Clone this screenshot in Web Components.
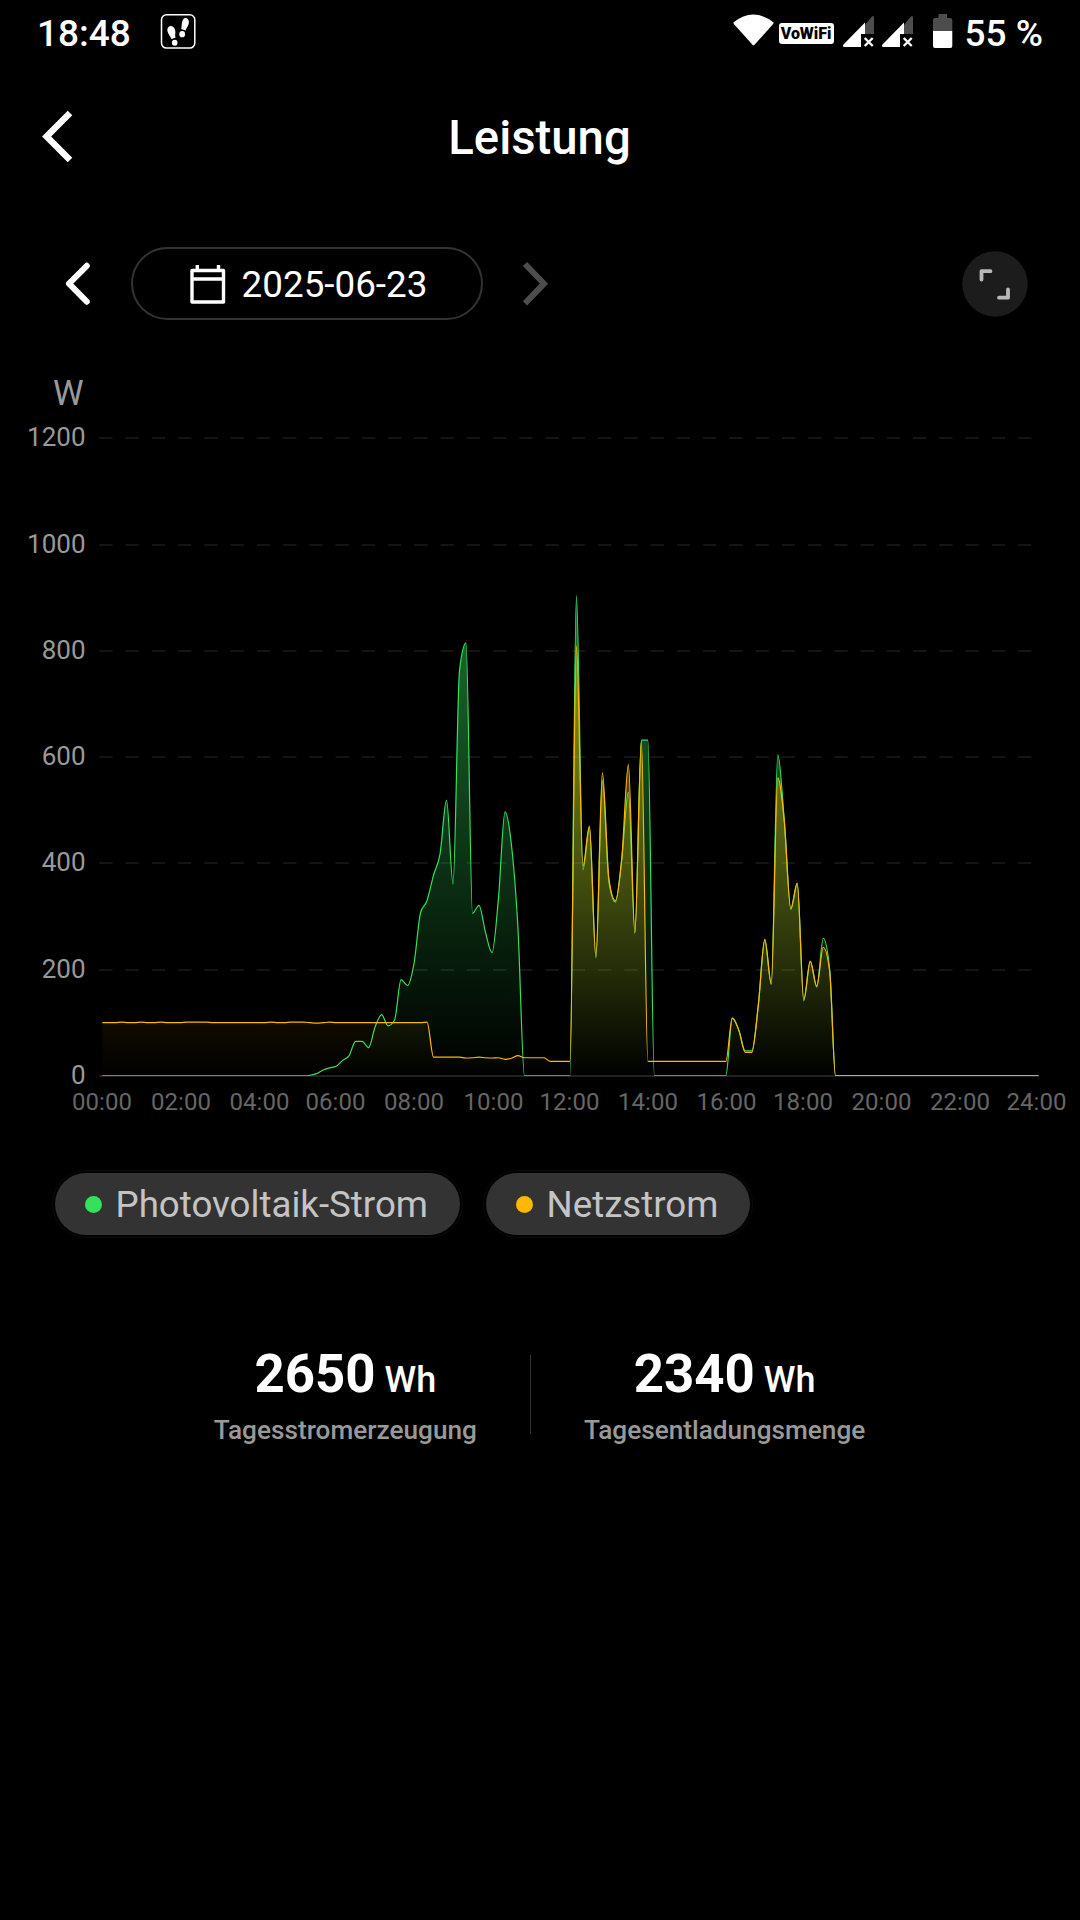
<!DOCTYPE html>
<html lang="de">

<head>
    <meta charset="UTF-8">
    <meta name="viewport" content="width=device-width, initial-scale=1.0">
    <title>Leistung</title>
    <style>
        body {
            margin: 0;
            background: #000;
            color: #fff;
            font-family: Roboto, "Liberation Sans", sans-serif;
        }
    </style>
</head>

<body>
    <template id="status-bar-template">
        <style>
            :host {
                display: flex;
                align-items: center;
                height: 66px;
                padding: 0 37px 0 37px;
                box-sizing: border-box;
                font-size: 37px;
                font-weight: 500;
            }
            svg { display: block; flex: none; }
            .time { width: 123px; }
            .icons { display: flex; align-items: center; margin-left: auto; height: 66px; }
            .badge {
                width: 55px;
                height: 21px;
                margin: 0 9px 0 5px;
                padding-bottom: 1px;
                box-sizing: border-box;
                border-radius: 3px;
                background: #fff;
                color: #000;
                font-size: 16px;
                font-weight: 900;
                line-height: 21px;
                text-align: center;
                white-space: nowrap;
            }
            .signal + .signal { margin-left: 8px; }
            .battery { margin: 0 12px 0 20px; }
        </style>
        <span class="time"><slot name="time"></slot></span>
        <svg width="37" height="66" viewBox="160 0 37 66">
            <rect x="161.5" y="14.8" width="33.3" height="33.3" rx="5" fill="none" stroke="#fff" stroke-width="1.5" />
            <g fill="#fff">
                <path d="M170.500 26c2.500-.5 4.500 2 4.800 5 .2 3-.5 4 .2 6.800l-4.200 1.200c-.8-3-2.800-4.300-3.600-7-.9-3 .2-5.500 2.800-6z" />
                <ellipse cx="174.700" cy="42.800" rx="2.800" ry="3" />
                <path d="M186 18c2.600.5 3.500 3.200 2.600 6.200-.8 2.600-2.300 3.500-2.900 6.200l-4.500-1.300c.7-2.700.3-4 .8-6.600.6-3 2-4.900 4-4.500z" />
                <ellipse cx="182.200" cy="34.200" rx="2.900" ry="3.100" />
            </g>
        </svg>
        <div class="icons">
            <svg width="41" height="66" viewBox="733 0 41 66">
                <path d="M733.300 22.500q20-16 40.400 0q-.2 1-1 2L754.500 44.700q-1 1-2 0L734.300 24.500q-.8-1-1-2z" fill="#fff" />
            </svg>
            <span class="badge">VoWiFi</span>
            <svg class="signal" width="31" height="66" viewBox="843 0 31 66">
                <path d="M865 25L871.500 17Q874 14.500 874 18V34H865z" fill="#4d4d4d" />
                <path d="M865 22.500V34H861V47H844.500Q842 46.500 843.500 44.500z" fill="#fff" />
                <path d="M864.700 38l8 8m0-8l-8 8" stroke="#fff" stroke-width="2.400" />
            </svg>
            <svg class="signal" width="31" height="66" viewBox="843 0 31 66">
                <path d="M865 25L871.500 17Q874 14.500 874 18V34H865z" fill="#4d4d4d" />
                <path d="M865 22.500V34H861V47H844.500Q842 46.500 843.500 44.500z" fill="#fff" />
                <path d="M864.700 38l8 8m0-8l-8 8" stroke="#fff" stroke-width="2.400" />
            </svg>
            <svg class="battery" width="20" height="66" viewBox="933 0 20 66">
                <path d="M938.500 18V14H947V18H950.500Q952.300 18 952.300 20V31H933V20Q933 18 935 18z" fill="#4d4d4d" />
                <path d="M933 31H952.300V46Q952.300 48 950.500 48H935Q933 48 933 46z" fill="#fff" />
            </svg>
            <span><slot name="battery"></slot></span>
        </div>
    </template>

    <template id="page-header-template">
        <style>
            :host {
                display: grid;
                grid-template-columns: 1fr auto 1fr;
                align-items: center;
                height: 142px;
                padding: 0 42px 0 41px;
            }
            svg { display: block; }
            h1 { margin: 0; padding-top: 2px; font-size: 47.300px; font-weight: 500; line-height: 56px; }
        </style>
        <svg width="33" height="56" viewBox="0 0 33 56">
            <path d="M29 4L5.600 27.500L29 51" fill="none" stroke="#fff" stroke-width="6.500" />
        </svg>
        <h1><slot></slot></h1>
    </template>

    <template id="date-picker-template">
        <style>
            :host {
                display: flex;
                align-items: center;
                height: 151px;
                margin-bottom: 1px;
                padding: 0 52px 0 65px;
            }
            svg { display: block; flex: none; }
            .date {
                display: flex;
                align-items: center;
                justify-content: center;
                gap: 16px;
                width: 352px;
                height: 73px;
                margin: 0 38px 0 40px;
                padding: 1px 0 0 3px;
                box-sizing: border-box;
                border: 2px solid #333;
                border-radius: 37px;
                font-size: 36.800px;
            }
            .expand { margin-left: auto; }
        </style>
        <svg width="26" height="48" viewBox="65 260 26 48">
            <path d="M86.800 265.800L69 283.700L86.800 301.700" fill="none" stroke="#fff" stroke-width="6" stroke-linecap="round" stroke-linejoin="round" />
        </svg>
        <div class="date">
            <svg width="36" height="42" viewBox="0 0 36 42">
                <path d="M2 7.500h31.500v31.500h-31.500zM2 16h32M7.300 2v5M28.500 2v5" fill="none" stroke="#fff" stroke-width="3.400" stroke-linejoin="round" />
            </svg>
            <slot></slot>
        </div>
        <svg width="30" height="48" viewBox="521 260 30 48">
            <path d="M525 264L544 283.700L525 303.400" fill="none" stroke="#4d4d4d" stroke-width="6" />
        </svg>
        <svg class="expand" width="66" height="66" viewBox="0 0 66 66">
            <circle cx="33" cy="33" r="32.700" fill="#1c1c1c" />
            <path d="M19.500 28.500V20.200H28.500M46 38.500V46.700H37" fill="none" stroke="#b8b8b8" stroke-width="3.800" stroke-linecap="round" stroke-linejoin="round" />
        </svg>
    </template>

    <template id="power-chart-template">
        <style>
            :host { display: block; height: 760px; }
            svg { display: block; }
            .unit { font-size: 34.500px; fill: #999; }
            .y { font-size: 26px; fill: #999; text-anchor: end; }
            .x { font-size: 24px; fill: #666; text-anchor: middle; }
            .grid { stroke: #141414; stroke-width: 2; stroke-dasharray: 13.300 12.950; }
            .axis { stroke: #222; stroke-width: 2; }
            .line { fill: none; stroke-width: 1.200; stroke-linejoin: bevel; }
        </style>
        <svg width="1080" height="760" viewBox="0 360 1080 760">
            <defs>
                <linearGradient id="pv-fill" x1="0" y1="0" x2="0" y2="1">
                    <stop offset="0" stop-color="#35e05c" stop-opacity=".5" />
                    <stop offset="1" stop-color="#35e05c" stop-opacity="0" />
                </linearGradient>
                <linearGradient id="net-fill" x1="0" y1="0" x2="0" y2="1">
                    <stop offset="0" stop-color="#ffb800" stop-opacity=".5" />
                    <stop offset="1" stop-color="#ffb800" stop-opacity="0" />
                </linearGradient>
                <clipPath id="plot">
                    <rect x="99" y="430" width="942" height="646" />
                </clipPath>
            </defs>
            <text class="unit" x="53" y="405">W</text>
            <g id="axes"></g>
            <g id="series" clip-path="url(#plot)"></g>
        </svg>
    </template>

    <template id="legend-chip-template">
        <style>
            :host {
                display: flex;
                align-items: center;
                gap: 13.500px;
                height: 62px;
                padding: 0 32px 0 30px;
                box-sizing: border-box;
                border-radius: 31px;
                outline: 1px solid #0c0c0c;
                outline-offset: 2px;
                background: #333;
                color: #c4c4c4;
                font-size: 36.700px;
            }
            i { width: 17px; height: 17px; border-radius: 50%; background: var(--dot); }
        </style>
        <i></i><slot></slot>
    </template>

    <template id="energy-stat-template">
        <style>
            :host { display: flex; flex-direction: column; align-items: center; }
            .value { display: flex; align-items: baseline; gap: 9px; height: 62px; font-size: 36px; font-weight: 500; line-height: 62px; }
            b { font-size: 52.800px; font-weight: 700; }
            .label { margin-top: 10px; color: #999; font-size: 26.200px; font-weight: 500; line-height: 30px; }
        </style>
        <div class="value"><b><slot name="value"></slot></b><slot name="unit"></slot></div>
        <div class="label"><slot></slot></div>
    </template>

    <template id="power-page-template">
        <style>
            :host { display: flex; flex-direction: column; width: 1080px; height: 1920px; overflow: hidden; background: #000; }
            .legend { display: flex; gap: 26px; margin: 53px 0 0 55px; }
            .stats { display: flex; justify-content: center; align-items: flex-start; gap: 53px; margin-top: 108px; padding-right: 1px; }
            .rule { width: 1px; height: 79px; margin-top: 12px; background: #333; }
        </style>
        <status-bar><span slot="time">18:48</span><span slot="battery">55 %</span></status-bar>
        <page-header>Leistung</page-header>
        <date-picker>2025-06-23</date-picker>
        <power-chart></power-chart>
        <div class="legend">
            <legend-chip style="--dot: #35e05c">Photovoltaik-Strom</legend-chip>
            <legend-chip style="--dot: #ffb800">Netzstrom</legend-chip>
        </div>
        <div class="stats">
            <energy-stat><span slot="value">2650</span><span slot="unit">Wh</span>Tagesstromerzeugung</energy-stat>
            <div class="rule"></div>
            <energy-stat><span slot="value">2340</span><span slot="unit">Wh</span>Tagesentladungsmenge</energy-stat>
        </div>
    </template>

    <power-page></power-page>

    <script>
        class TemplateElement extends HTMLElement {
            constructor() {
                super();
                this.attachShadow({ mode: 'open' });
                const tmp = document.getElementById(this.localName + '-template');
                this.shadowRoot.appendChild(tmp.content.cloneNode(true));
            }
        }

        // watts, one value every ten minutes from 00:00
        const fill = (n, v) => Array(n).fill(v);
        const pv = [
            ...fill(32, 0), 1, 4, 11, 15, 18, 29, 38, 65, 65, 53, 92, 115, 94, 105, 181, 170, 212, 307, 330,
            378, 418, 519, 361, 763, 815, 306, 321, 270, 232, 335, 497, 434, 277, ...fill(8, 0),
            904, 388, 468, 222, 556, 365, 327, 411, 534, 268, 632, 632, ...fill(12, 0),
            108, 86, 47, 47, 133, 256, 172, 605, 481, 313, 362, 141, 215, 167, 259, 199
        ];
        const net = [
            100, 100, 100, 101, 100, 100, 101, 100, 100, 101, 100, 100, 100, 101, 101, 101, 101, 100, 100, 100,
            100, 100, 100, 100, 100, 100, 101, 100, 100, 101, 101, 101, 100, 99, 100, 101, 100, 100, 100, 100,
            100, 100, 100, 100, 100, 100, 100, 100, 100, 100, 101, 35, 35, 35, 35, 35, 33.5, 34, 35, 34, 33.5,
            34, 31, 33, 38, 34, 34, 34, 34, 27, 27, 27, 27,
            809, 395, 470, 225, 571, 371, 330, 412, 586, 270, 630, ...fill(13, 27),
            109, 86, 44, 44, 132, 257, 174, 561, 480, 315, 363, 144, 216, 169, 242, 196
        ];

        const LEFT = 102.3, BASE = 1075.8, STEP = 6.495, SCALE = .5311;

        function toPoints(values) {
            const points = values.map((v, i) => [LEFT + i * STEP, BASE - v * SCALE]);
            // last reading is 18:48, nothing after that
            points.push([835.5, BASE], [1038.5, BASE]);
            return points;
        }

        // monotone cubic: flat at every peak and valley, no overshoot
        function smoothPath(points) {
            const slope = i => (points[i + 1][1] - points[i][1]) / (points[i + 1][0] - points[i][0]);
            const tangents = points.map((p, i) => {
                if (i === 0 || i === points.length - 1) return 0;
                const a = slope(i - 1), b = slope(i);
                if (a * b <= 0) return 0;
                return Math.sign(a) * Math.min(2 * Math.abs(a), 2 * Math.abs(b), Math.abs(a + b) / 2);
            });
            let d = `M${points[0]}`;
            for (let i = 1; i < points.length; i++) {
                const [px, py] = points[i - 1];
                const [x, y] = points[i];
                const h = (x - px) / 3;
                d += `C${px + h},${py + h * tangents[i - 1]} ${x - h},${y - h * tangents[i]} ${x},${y}`;
            }
            return d;
        }

        class PowerChart extends TemplateElement {
            connectedCallback() {
                let axes = '';
                for (let w = 0; w <= 1200; w += 200) {
                    const y = Math.floor(1076.3 - w * .5313);
                    axes += `<line class="${w ? 'grid' : 'axis'}" x1="99.300" x2="${w ? 1034 : 1039}" y1="${y}" y2="${y}" />`;
                    axes += `<text class="y" x="85.500" y="${y + 8}">${w}</text>`;
                }
                const centers = [102, 181, 259.5, 335.5, 414, 493.5, 569.5, 648, 726.5, 803, 881.5, 960, 1036.5];
                centers.forEach((x, i) => {
                    axes += `<text class="x" x="${x}" y="1110.300">${String(i * 2).padStart(2, '0')}:00</text>`;
                });
                this.shadowRoot.getElementById('axes').innerHTML = axes;

                let series = '';
                [[pv, 'pv', '#35e05c'], [net, 'net', '#ffb800']].forEach(([values, id, color]) => {
                    const d = smoothPath(toPoints(values));
                    series += `<path d="${d}V${BASE}H${LEFT}Z" fill="url(#${id}-fill)" /><path class="line" d="${d}" stroke="${color}" />`;
                });
                this.shadowRoot.getElementById('series').innerHTML = series;
            }
        }

        window.customElements.define('status-bar', class extends TemplateElement { })
        window.customElements.define('page-header', class extends TemplateElement { })
        window.customElements.define('date-picker', class extends TemplateElement { })
        window.customElements.define('power-chart', PowerChart)
        window.customElements.define('legend-chip', class extends TemplateElement { })
        window.customElements.define('energy-stat', class extends TemplateElement { })
        window.customElements.define('power-page', class extends TemplateElement { })
    </script>
</body>

</html>
